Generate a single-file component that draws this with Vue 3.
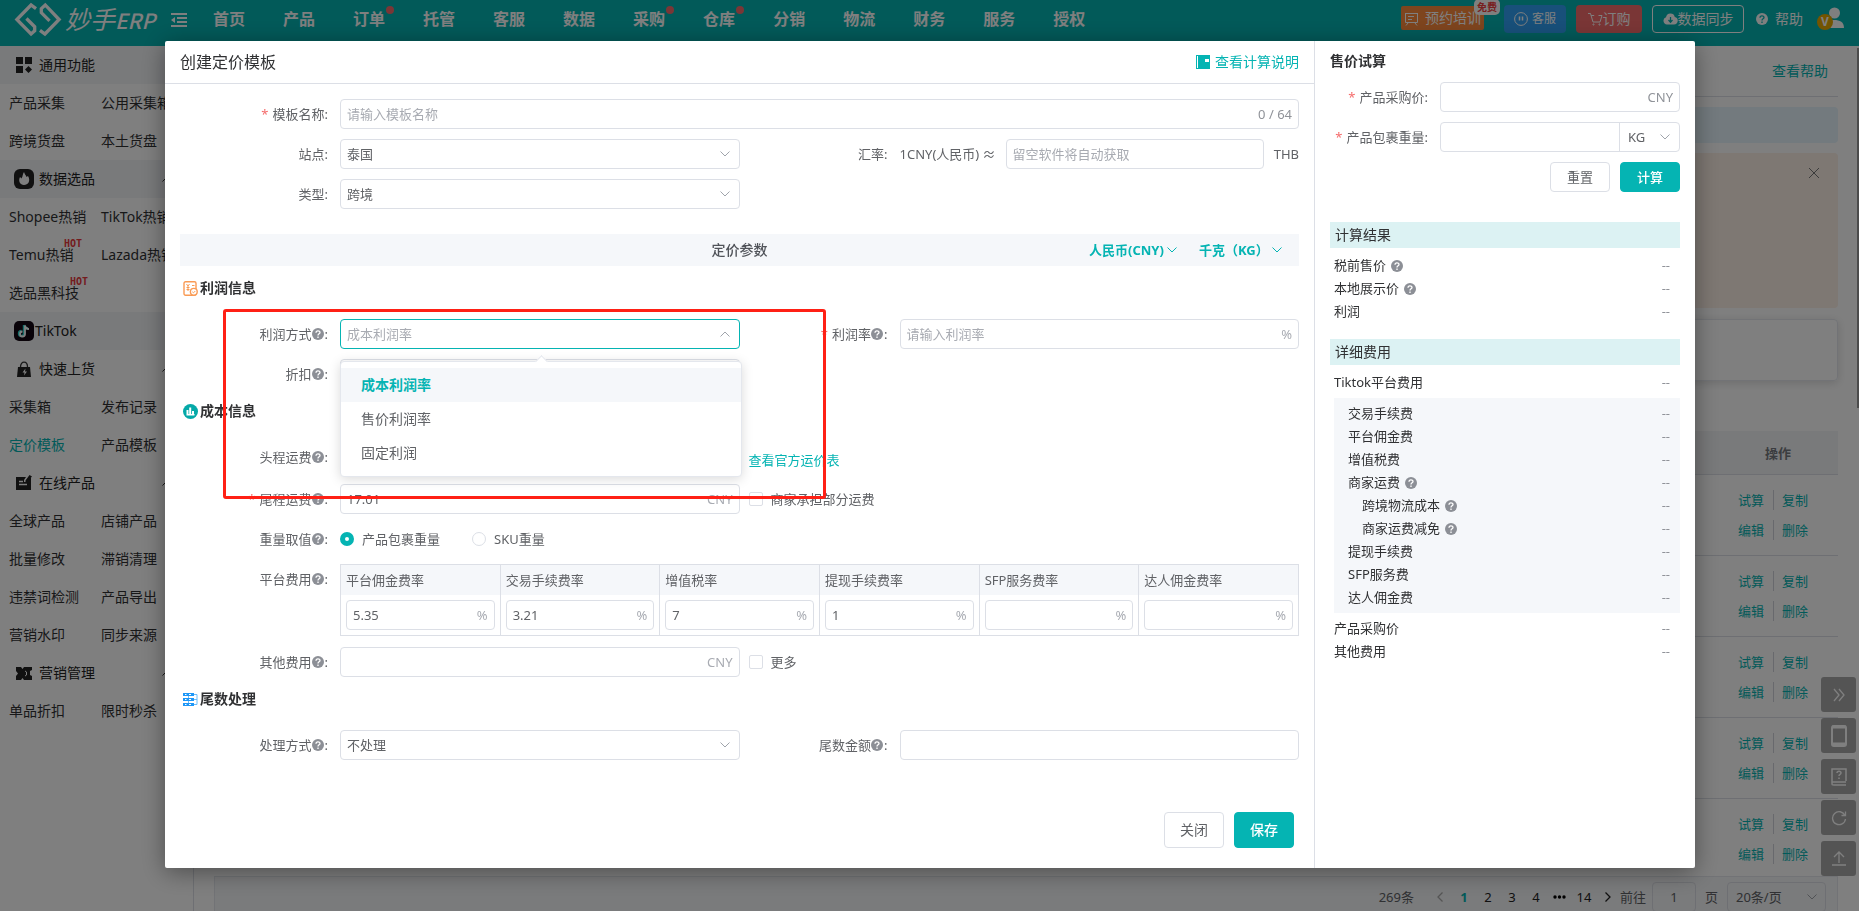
<script setup>
import { ref } from 'vue'

const nav = [
  { name: '首页' }, { name: '产品' }, { name: '订单', dot: true }, { name: '托管' },
  { name: '客服' }, { name: '数据' }, { name: '采购', dot: true }, { name: '仓库', dot: true },
  { name: '分销' }, { name: '物流' }, { name: '财务' }, { name: '服务' }, { name: '授权' },
]

const menu = [
  { head: '通用功能', icon: 'grid', shaded: true, rows: [['产品采集', '公用采集箱'], ['跨境货盘', '本土货盘']] },
  { head: '数据选品', icon: 'fire', shaded: true, arrow: true, rows: [['Shopee热销', 'TikTok热销'], ['Temu热销', 'Lazada热销'], ['选品黑科技']] },
  { head: 'TikTok', icon: 'tiktok', shaded: true, rows: [] },
  { head: '快速上货', icon: 'bag', arrow: true, rows: [['采集箱', '发布记录'], ['定价模板', '产品模板']] },
  { head: '在线产品', icon: 'edit', arrow: true, rows: [['全球产品', '店铺产品'], ['批量修改', '滞销清理'], ['违禁词检测', '产品导出'], ['营销水印', '同步来源']] },
  { head: '营销管理', icon: 'ticket', arrow: true, rows: [['单品折扣', '限时秒杀']] },
]
const hot = ['Temu热销', '选品黑科技']

const fees = ref([
  { name: '平台佣金费率', value: '5.35' },
  { name: '交易手续费率', value: '3.21' },
  { name: '增值税率', value: '7' },
  { name: '提现手续费率', value: '1' },
  { name: 'SFP服务费率', value: '' },
  { name: '达人佣金费率', value: '' },
])

const results = [
  { name: '税前售价', tip: true }, { name: '本地展示价', tip: true }, { name: '利润' },
]
const details = [
  { name: '交易手续费' }, { name: '平台佣金费' }, { name: '增值税费' }, { name: '商家运费', tip: true },
  { name: '跨境物流成本', tip: true, sub: true }, { name: '商家运费减免', tip: true, sub: true },
  { name: '提现手续费' }, { name: 'SFP服务费' }, { name: '达人佣金费' },
]

const modes = ['成本利润率', '售价利润率', '固定利润']
const mode = ref('成本利润率')
const tailCost = ref('17.01')
const weight = ref('package')
</script>

<template>
  <div class="app">
    <svg class="defs" aria-hidden="true">
      <symbol id="down" viewBox="0 0 10 6"><path d="M.5.5 5 5 9.500.5" fill="none" stroke="currentColor" /></symbol>
      <symbol id="up" viewBox="0 0 10 6"><path d="M.5 5.500 5 1l4.500 4.500" fill="none" stroke="currentColor" /></symbol>
      <symbol id="help" viewBox="0 0 12 12">
        <circle cx="6" cy="6" r="6" fill="currentColor" />
        <path class="hook" d="M4 4.700C4 2.300 8 2.300 8 4.600 8 5.900 6 5.800 6 7.400M6 8.400v1.500" fill="none" stroke-width="1.300" />
      </symbol>
    </svg>

    <header class="top">
      <a class="brand" href="#">
        <svg width="48" height="35" viewBox="42 4 144 106" fill="none" stroke="#fff" stroke-width="10">
          <path d="M108 24 93 13 50 57l43 44 11-10V79L79 54" />
          <path d="M120 90l15 11 43-44-42-44-12 11v12l25 25" />
        </svg>
        <span class="word">妙手<b>ERP</b></span>
      </a>
      <button class="fold" aria-label="收起菜单">
        <svg width="16" height="14" viewBox="0 0 16 14" fill="#fff"><path d="M0 0h16v2H0zM6 4h10v2H6zM6 8h10v2H6zM0 12h16v2H0zM4 4v6L0 7z" /></svg>
      </button>
      <nav class="nav">
        <a v-for="n in nav" :key="n.name" href="#">{{ n.name }}<i v-if="n.dot" class="dot"></i></a>
      </nav>
      <div class="tools">
        <a class="train" href="#">
          <svg width="15" height="15" viewBox="0 0 15 15" fill="none" stroke="#fff"><path d="M1 2.500h13M1.500 2.500v9h12v-9M4 5.500h6M4 8.500h4M4 12l-2 2.500M11 12l2 2.500" /></svg>
          预约培训<span class="free">免费</span>
        </a>
        <button class="tool blue">
          <svg width="14" height="14" viewBox="0 0 14 14" fill="none" stroke="#fff"><circle cx="7" cy="7" r="6.400" /><path d="M5.500 4.500v4M8.500 4.500v4" stroke-width="1.500" /></svg>
          客服
        </button>
        <button class="tool red">
          <svg width="15" height="14" viewBox="0 0 15 14" fill="none" stroke="#fff"><path d="M0 1.500h2.500L5 10h7l2-6.500H10.500M3.200 3.500h3" /><circle cx="5.500" cy="12.500" r=".6" /><circle cx="11.500" cy="12.500" r=".6" /></svg>订购
        </button>
        <button class="tool line">
          <svg width="15" height="12" viewBox="0 0 15 12"><path d="M4 11.500A3.700 3.700 0 0 1 3 4.300 4.500 4.500 0 0 1 11.800 4 3.800 3.800 0 0 1 11 11.500z" fill="#fff" /><path d="M7.500 4v5M5.500 7l2 2.200L9.500 7" stroke="#05b4b3" fill="none" stroke-width="1.300" /></svg>数据同步
        </button>
        <a class="assist" href="#"><svg class="q"><use href="#help" /></svg>帮助</a>
        <a class="user" href="#" aria-label="账号">
          <svg width="28" height="24" viewBox="0 0 28 24"><circle cx="17.500" cy="6" r="5.500" fill="#fff" /><path d="M8 21c0-6 3-8 9-8s10 2 10 8z" fill="#fff" /><circle cx="8" cy="15" r="8" fill="#e6a800" /></svg>
          <span>V</span>
        </a>
      </div>
    </header>

    <div class="shell">
      <aside class="side">
        <section v-for="g in menu" :key="g.head">
          <h3 :class="['head', g.icon, { shaded: g.shaded }]">
            <svg v-if="g.icon === 'grid'" width="16" height="16" viewBox="0 0 16 16"><path d="M0 0h7v7H0zM9 0h7v7H9zM0 9h7v7H0zM12.500 9 16 12.500l-3.500 3.500L9 12.500z" /></svg>
            <svg v-else-if="g.icon === 'fire'" width="20" height="20" viewBox="0 0 20 20"><rect width="20" height="20" rx="6" /><path d="M10 3c1 3 2 3 2.500 5L14 7c3 5 0 9-4 9s-6-4-4-8l1.500 1.500C9 7 8.500 5 10 3z" fill="#fff" /></svg>
            <svg v-else-if="g.icon === 'tiktok'" width="20" height="20" viewBox="0 0 20 20"><rect width="20" height="20" rx="5" fill="#120612" /><path d="M10 4v8.500a2.500 2.500 0 1 1-2.500-2.500M10 4c.5 2.500 2 3.500 4 3.500" fill="none" stroke="#2cd9d3" stroke-width="2.400" /><path d="M11 4.500V13a2.500 2.500 0 1 1-2.500-2.500M11 4.500c.5 2.500 2 3.500 4 3.500" fill="none" stroke="#fff" stroke-width="1.800" /></svg>
            <svg v-else-if="g.icon === 'bag'" width="16" height="16" viewBox="0 0 16 16"><path d="M2 6h12l1 10H1z" /><path d="M4.500 6C4.500-.5 11.500-.5 11.500 6" fill="none" stroke="#333" stroke-width="1.300" /><path d="M9.500 7.500 6.500 11.500h2L8 14.500 11 10.500H9z" fill="#fff" /></svg>
            <svg v-else-if="g.icon === 'edit'" width="16" height="16" viewBox="0 0 16 16"><path d="M0 2h10L8 5v2l2 0 4-4h1v12H0zM13.500 0 16 1.500 11 7H9.500V5.500z" /><path d="M3 6.500h4M3 9.500h8" stroke="#fff" stroke-width="1.300" /></svg>
            <svg v-else width="16" height="13" viewBox="0 0 16 13"><path d="M0 0h5l1.500 2L8 0h8v3l-2 1v4l2 1v4H8l-1.500-2L5 13H0V9l2-2.500L0 4z" /><path d="M9 4l1.500 1v3L9 9" stroke="#fff" fill="none" /></svg>
            <span>{{ g.head }}</span>
            <svg v-if="g.arrow" class="chev"><use href="#up" /></svg>
          </h3>
          <div v-for="(r, i) in g.rows" :key="i" class="row">
            <a v-for="t in r" :key="t" href="#" :class="{ on: t === '定价模板' }">{{ t }}<sup v-if="hot.includes(t)">HOT</sup></a>
          </div>
        </section>
      </aside>

      <main class="main">
        <div class="mainhead"><a href="#">查看帮助</a></div>
        <div class="info"></div>
        <div class="warn">
          <button aria-label="关闭提示"><svg width="12" height="12" viewBox="0 0 12 12" stroke="#777" fill="none"><path d="m1 1 10 10M11 1 1 11" /></svg></button>
        </div>
        <div class="card"></div>
        <div class="thead"><span>操作</span></div>
        <div class="tbody">
          <div v-for="n in 5" :key="n" class="trow">
            <div><a href="#">试算</a><a href="#">复制</a></div>
            <div><a href="#">编辑</a><a href="#">删除</a></div>
          </div>
        </div>
        <div class="pager">
          <span class="total">269条</span>
          <button aria-label="上一页"><svg width="6" height="10" viewBox="0 0 6 10" fill="none" stroke="#aaa" stroke-width="1.300"><path d="M5.500.5 1 5l4.500 4.500" /></svg></button>
          <button class="now">1</button><button>2</button><button>3</button><button>4</button>
          <button aria-label="更多页"><svg width="13" height="4" viewBox="0 0 13 4"><circle cx="2" cy="2" r="1.700" /><circle cx="6.500" cy="2" r="1.700" /><circle cx="11" cy="2" r="1.700" /></svg></button>
          <button>14</button>
          <button aria-label="下一页"><svg width="6" height="10" viewBox="0 0 6 10" fill="none" stroke="#222" stroke-width="1.300"><path d="M.5.5 5 5 .5 9.500" /></svg></button>
          <label class="goto" for="page">前往</label>
          <input id="page" value="1" />
          <span class="unit">页</span>
          <div class="size">
            <select aria-label="每页条数"><option>20条/页</option></select>
            <svg class="chev"><use href="#down" /></svg>
          </div>
        </div>
      </main>
    </div>

    <div class="scroll"></div>
    <div class="float">
      <button aria-label="展开"><svg width="12" height="14" viewBox="0 0 12 14"><path d="m1 1 5 6-5 6M6 1l5 6-5 6" stroke-width="1.300" /></svg></button>
      <button aria-label="手机版"><svg width="16" height="22" viewBox="0 0 16 22"><rect x="1" y="1" width="14" height="20" rx="2" stroke-width="2" /><path d="M1 2h14M1 19h14" stroke-width="3" /></svg></button>
      <button aria-label="帮助手册"><svg width="16" height="18" viewBox="0 0 16 18"><path d="M15 13V1H1v14c0 2 0 2 2 2h12M1 14h14M6 5c0-2.500 4-2.500 4 0 0 1.500-2 1.200-2 3M8 9.500v1.500" stroke-width="1.500" /></svg></button>
      <button aria-label="刷新"><svg width="16" height="16" viewBox="0 0 16 16"><path d="M14 5.500A6.500 6.500 0 1 0 14.500 9M14.500 1.500v4h-4" stroke-width="1.300" /></svg></button>
      <button aria-label="回到顶部"><svg width="14" height="15" viewBox="0 0 14 15"><path d="M7 12V1M2 6l5-5 5 5M0 14h14" stroke-width="1.300" /></svg></button>
    </div>

    <div class="mask">
      <div class="modal" role="dialog" aria-label="创建定价模板">
        <form class="left" @submit.prevent>
          <div class="title">
            <h2>创建定价模板</h2>
            <a href="#">
              <svg width="14" height="14" viewBox="0 0 14 14"><path d="M0 0h14v14H0z" fill="#05b4b3" /><path d="M1.500 1v12" stroke="#fff" /><path d="M9 4h4v3H9z" fill="#fff" /></svg>
              <span>查看计算说明</span>
            </a>
          </div>

          <div class="form">
            <div class="frow">
              <label class="lab" for="name"><em>*</em>模板名称:</label>
              <div class="box span3"><input id="name" placeholder="请输入模板名称" /><span class="suf dark">0 / 64</span></div>
            </div>
            <div class="frow">
              <label class="lab" for="site">站点:</label>
              <div class="box"><select id="site"><option>泰国</option></select><svg class="chev"><use href="#down" /></svg></div>
              <label class="lab" for="rate">汇率:</label>
              <div class="rate">
                <span>1CNY(人民币) ≈</span>
                <div class="box"><input id="rate" placeholder="留空软件将自动获取" /></div>
                <span>THB</span>
              </div>
            </div>
            <div class="frow">
              <label class="lab" for="type">类型:</label>
              <div class="box"><select id="type"><option>跨境</option></select><svg class="chev"><use href="#down" /></svg></div>
            </div>

            <div class="bar">
              <span></span><h3>定价参数</h3>
              <div class="units">
                <div><select aria-label="币种"><option>人民币(CNY)</option></select><svg class="chev"><use href="#down" /></svg></div>
                <div><select aria-label="重量单位"><option>千克（KG）</option></select><svg class="chev"><use href="#down" /></svg></div>
              </div>
            </div>

            <h4 class="sect">
              <svg width="15" height="15" viewBox="0 0 15 15" fill="none" stroke="#f99b55"><rect x="1" y=".7" width="12" height="13.500" rx="1.500" stroke-width="1.400" /><path d="m3.500 3 1.500 2 1.500-2M5 5v5M3.500 6.500h3M3.500 8.500h3M9 4.500h2.500" /><circle cx="10.800" cy="10.800" r="3.400" fill="#fff" stroke-width="1.400" /><path d="m9.300 10.800 1.200 1 1.800-1.800" /></svg>利润信息
            </h4>
            <div class="frow">
              <label class="lab" for="mode">利润方式<svg class="q"><use href="#help" /></svg>:</label>
              <div class="box focus">
                <select id="mode" v-model="mode" class="hint"><option v-for="m in modes" :key="m">{{ m }}</option></select>
                <svg class="chev"><use href="#up" /></svg>
                <ul class="drop" role="listbox">
                  <li v-for="m in modes" :key="m" role="option" :class="{ on: m === mode }" @click="mode = m">{{ m }}</li>
                </ul>
              </div>
              <label class="lab" for="ratio"><em>*</em>利润率<svg class="q"><use href="#help" /></svg>:</label>
              <div class="box"><input id="ratio" placeholder="请输入利润率" /><span class="suf">%</span></div>
            </div>
            <div class="frow">
              <label class="lab" for="discount">折扣<svg class="q"><use href="#help" /></svg>:</label>
              <div class="box"><input id="discount" /></div>
            </div>

            <h4 class="sect">
              <svg width="15" height="15" viewBox="0 0 15 15"><circle cx="7.500" cy="7.500" r="7.500" fill="#05a9a8" /><path d="M3.500 6h2v5h-2zM6.200 3.500h2V11h-2zM9 7h2v4H9zM3.500 10h8v1.500h-8z" fill="#fff" /></svg>成本信息
            </h4>
            <div class="frow tall">
              <label class="lab" for="first">头程运费<svg class="q"><use href="#help" /></svg>:</label>
              <div class="box"><input id="first" /></div>
              <div class="extra"><a href="#">查看官方运价表</a></div>
            </div>
            <div class="frow">
              <label class="lab" for="tail"><em>*</em>尾程运费<svg class="q"><use href="#help" /></svg>:</label>
              <div class="box"><input id="tail" v-model="tailCost" /><span class="suf">CNY</span></div>
              <div class="extra"><label class="tick"><input type="checkbox" />商家承担部分运费</label></div>
            </div>
            <div class="frow">
              <span class="lab">重量取值<svg class="q"><use href="#help" /></svg>:</span>
              <div class="radios">
                <label class="tick"><input v-model="weight" type="radio" value="package" />产品包裹重量</label>
                <label class="tick"><input v-model="weight" type="radio" value="sku" />SKU重量</label>
              </div>
            </div>
            <div class="frow">
              <span class="lab">平台费用<svg class="q"><use href="#help" /></svg>:</span>
              <table class="fees span3">
                <thead><tr><th v-for="f in fees" :key="f.name">{{ f.name }}</th></tr></thead>
                <tbody><tr><td v-for="f in fees" :key="f.name"><div class="box"><input v-model="f.value" :aria-label="f.name" /><span class="suf">%</span></div></td></tr></tbody>
              </table>
            </div>
            <div class="frow">
              <label class="lab" for="other">其他费用<svg class="q"><use href="#help" /></svg>:</label>
              <div class="box"><input id="other" /><span class="suf">CNY</span></div>
              <div class="extra"><label class="tick"><input type="checkbox" />更多</label></div>
            </div>

            <h4 class="sect">
              <svg width="15" height="13" viewBox="0 0 15 13"><path d="M0 0h11v3H0zM0 5h11v3H0zM0 10h11v3H0z" fill="#1e97f7" /><path d="M2 1.500h1.500M6 1.500h2M2 6.500h1.500M6 6.500h2M2 11.500h1.500M6 11.500h2" stroke="#fff" /><path d="M5.500 3v2M5.500 8v2M11 1.500h3v10h-3M11 6.500h3" stroke="#6bbcfa" fill="none" /></svg>尾数处理
            </h4>
            <div class="frow">
              <label class="lab" for="round">处理方式<svg class="q"><use href="#help" /></svg>:</label>
              <div class="box"><select id="round"><option>不处理</option></select><svg class="chev"><use href="#down" /></svg></div>
              <label class="lab" for="amount">尾数金额<svg class="q"><use href="#help" /></svg>:</label>
              <div class="box"><input id="amount" /></div>
            </div>
          </div>

          <div class="foot">
            <button type="button" class="btn">关闭</button>
            <button type="submit" class="btn main-btn">保存</button>
          </div>
          <div class="marker"></div>
        </form>

        <form class="right" @submit.prevent>
          <h3>售价试算</h3>
          <div class="trial">
            <label class="lab" for="buy"><em>*</em>产品采购价:</label>
            <div class="box"><input id="buy" /><span class="suf dark">CNY</span></div>
            <label class="lab" for="pack"><em>*</em>产品包裹重量:</label>
            <div class="box pack">
              <input id="pack" />
              <div class="kg"><select aria-label="重量单位"><option>KG</option></select><svg class="chev"><use href="#down" /></svg></div>
            </div>
          </div>
          <div class="acts">
            <button type="reset" class="btn small">重置</button>
            <button type="submit" class="btn small main-btn">计算</button>
          </div>
          <h4>计算结果</h4>
          <div class="list">
            <div v-for="r in results" :key="r.name" class="item">
              <span>{{ r.name }}</span><svg v-if="r.tip" class="q"><use href="#help" /></svg><b>--</b>
            </div>
          </div>
          <h4>详细费用</h4>
          <div class="list">
            <div class="item"><span>Tiktok平台费用</span><b>--</b></div>
            <div class="inner">
              <div v-for="r in details" :key="r.name" :class="['item', { sub: r.sub }]">
                <span>{{ r.name }}</span><svg v-if="r.tip" class="q"><use href="#help" /></svg><b>--</b>
              </div>
            </div>
            <div class="item"><span>产品采购价</span><b>--</b></div>
            <div class="item"><span>其他费用</span><b>--</b></div>
          </div>
        </form>
      </div>
    </div>
  </div>
</template>

<style>
body { margin: 0; background: #fff; }
</style>

<style scoped>
.app, .app * { box-sizing: border-box; }
.app {
  display: flex; flex-direction: column; height: 100vh; overflow: hidden; position: relative;
  font: 13px/20px "Noto Sans", "Noto Sans CJK SC", sans-serif; color: #606266;
}
.defs { position: absolute; width: 0; height: 0; }
.hook { stroke: var(--mark, #fff); }
button, input, select { font: inherit; color: inherit; margin: 0; padding: 0; border: 0; background: none; outline: 0; }
select { appearance: none; }
h2, h3, h4, ul { margin: 0; padding: 0; list-style: none; }
a { color: #05b4b3; text-decoration: none; }
svg { flex: none; }
.chev { width: 10px; height: 6px; color: #a0a4ab; pointer-events: none; }
.q { width: 12px; height: 12px; color: #8c8f96; }

.top { flex: none; display: flex; align-items: center; height: 46px; padding: 0 16px 8px 14px; background: #05b4b3; }
.brand { display: flex; align-items: center; color: #fff; width: 157px; }
.word { font-size: 25px; line-height: 34px; font-style: italic; margin-left: 3px; white-space: nowrap; }
.word b { font-family: "Noto Sans CJK SC", sans-serif; font-weight: 500; font-size: 21px; }
.fold { width: 16px; height: 14px; display: flex; margin-right: 26px; margin-top: 1px; }
.nav { display: flex; gap: 38px; flex: 1; }
.nav a { position: relative; color: #fff; font-size: 16px; font-weight: 700; line-height: 24px; }
.dot { position: absolute; right: -9px; top: -1px; width: 8px; height: 8px; border-radius: 50%; background: #f56c6c; }
.tools { display: flex; align-items: center; color: #fff; font-size: 14px; }
.tools a { color: #fff; }
.train { position: relative; display: flex; align-items: center; gap: 6px; height: 24px; width: 83px; padding-left: 3px; background: #fc8a3c; margin: 0 20px 2px 0; border-radius: 2px; white-space: nowrap; }
.free { position: absolute; right: -16px; top: -7px; padding: 0 3px; border-radius: 5px; background: #fff; color: #f04040; font-size: 10px; line-height: 16px; font-weight: 700; }
.tool { display: flex; align-items: center; justify-content: center; height: 28px; border-radius: 4px; margin-right: 10px; white-space: nowrap; }
.tool.blue { width: 62px; gap: 4px; font-size: 12px; background: #30a0f4; }
.tool.red { width: 66px; background: #f56c6c; }
.tool.line { width: 92px; border: 1px solid #fff; margin-right: 12px; }
.assist { display: flex; align-items: center; gap: 7px; margin-right: 14px; }
.assist .q { color: #fff; --mark: #05b4b3; }
.user { position: relative; width: 26px; height: 24px; }
.user span { position: absolute; left: 0; top: 5px; width: 16px; text-align: center; font-size: 12px; font-weight: 700; }

.shell { display: flex; flex: 1; min-height: 0; }
.side { flex: none; width: 194px; border-right: 1px solid #dcdfe6; font-size: 14px; overflow: hidden; }
.head { display: flex; align-items: center; height: 38px; padding: 0 21px 0 16px; font-size: 14px; font-weight: 400; color: #222; gap: 7px; fill: #222; }
.head.shaded { background: #f2f4f7; }
.head.fire { padding-left: 14px; gap: 5px; }
.head.tiktok { padding-left: 14px; gap: 1px; }
.head .chev { margin-left: auto; color: #333; }
.row { display: flex; align-items: center; height: 38px; padding-left: 9px; line-height: 14px; }
.row a { position: relative; min-width: 92px; color: #303133; white-space: nowrap; }
.row a.on { color: #05b4b3; }
.row sup { position: absolute; left: 55px; top: -8px; color: #e8383d; font: 700 10px/8px "DejaVu Sans Mono", monospace; }
.row a:nth-child(1):last-child sup { left: 61px; }

.main { flex: 1; min-width: 0; display: flex; flex-direction: column; padding: 0 21px 0 20px; }
.mainhead { display: flex; justify-content: flex-end; align-items: center; height: 51px; padding-right: 10px; border-bottom: 1px solid #dcdfe6; font-size: 14px; flex: none; }
.info { flex: none; height: 36px; margin: 10px 0; border-radius: 4px; background: #e6f5fc; }
.warn { flex: none; height: 155px; border-radius: 4px; background: #fdf0e6; display: flex; justify-content: flex-end; align-items: flex-start; padding: 14px 18px; }
.warn button { display: flex; }
.card { flex: none; height: 62px; margin: 11px 0 50px; border: 1px solid #e4e7ed; border-radius: 4px; box-shadow: 0 2px 10px rgba(0, 0, 0, .15); }
.thead { flex: none; display: flex; justify-content: flex-end; align-items: center; height: 44px; padding-right: 47px; background: #f3f4f6; color: #777a80; font-weight: 700; border-bottom: 1px solid #dcdfe6; }
.tbody { flex: 1; min-height: 0; overflow: hidden; }
.trow { display: flex; flex-direction: column; align-items: flex-end; justify-content: center; gap: 10px; height: 81px; padding-right: 22px; border-bottom: 1px solid #dcdfe6; }
.trow div { display: flex; }
.trow a { width: 43px; padding-left: 8px; line-height: 20px; }
.trow a + a { border-left: 1px solid #d0d3da; }
.pager { flex: none; display: flex; justify-content: flex-end; align-items: center; height: 35px; padding: 6px 11px 0 0; background: #f5f6f8; border: 1px solid #e4e7ed; border-bottom: 0; color: #606266; }
.pager button { min-width: 24px; color: #222; display: flex; align-items: center; justify-content: center; }
.pager .now { color: #05b4b3; font-weight: 700; }
.total { margin-right: 14px; }
.pager .goto { margin: 0 6px 0 0; }
.pager input { width: 44px; height: 30px; border: 1px solid #dcdfe6; border-radius: 4px; text-align: center; }
.unit { margin: 0 9px; }
.size { display: flex; align-items: center; width: 99px; height: 30px; border: 1px solid #dcdfe6; border-radius: 4px; padding: 0 8px; }
.size select { flex: 1; }

.scroll { position: absolute; right: 0; top: 48px; width: 2px; height: 360px; background: #999; }
.float { position: absolute; right: 3px; bottom: 35px; display: flex; flex-direction: column; gap: 6px; }
.float button { width: 35px; height: 35px; border-radius: 3px; background: #a9a9a9; display: flex; align-items: center; justify-content: center; }
.float svg { fill: none; stroke: #fff; }

.mask { position: fixed; inset: 0; background: rgba(0, 0, 0, .5); padding: 41px 164px 0 165px; overflow: hidden; }
.modal { display: flex; background: #fff; border-radius: 2px; box-shadow: 0 4px 24px rgba(0, 0, 0, .4); }
.left { position: relative; flex: 1; min-width: 0; border-right: 1px solid #dcdfe6; }
.title { display: flex; align-items: center; justify-content: space-between; height: 43px; padding: 0 15px; border-bottom: 1px solid #dcdfe6; }
.title h2 { font-size: 16px; font-weight: 400; color: #303133; }
.title a { display: flex; align-items: center; gap: 5px; font-size: 14px; }
.form { padding: 15px 15px 0; }
.frow { display: grid; grid-template-columns: 160px 1fr 160px 1fr; align-items: center; min-height: 30px; margin-bottom: 10px; }
.frow.tall { min-height: 32px; align-items: start; }
.frow.tall .extra { align-self: end; line-height: 28px; }
.lab { display: flex; align-items: center; justify-content: flex-end; padding-right: 12px; min-height: 30px; align-self: start; white-space: nowrap; }
.lab em { color: #f56c6c; font-style: normal; margin-right: 4px; }
.lab .q { margin-right: 1px; }
.box { position: relative; display: flex; align-items: center; height: 30px; border: 1px solid #dcdfe6; border-radius: 4px; background: #fff; padding: 0 6px; min-width: 0; }
.box input, .box select { flex: 1; min-width: 0; width: 100%; height: 28px; }
.box > .chev { margin-right: 3px; }
.box input::placeholder { color: #a8abb2; opacity: 1; }
.box select.hint { color: #a8abb2; }
.box.focus { border-color: #05b4b3; }
.suf { color: #a8abb2; }
.suf.dark { color: #909399; }
.span3 { grid-column: 2 / 5; }
.rate { display: flex; align-items: center; gap: 10px; white-space: nowrap; }
.rate .box { flex: 1; }
.bar { display: grid; grid-template-columns: 1fr auto 1fr; align-items: center; height: 32px; margin-top: 25px; background: #f5f7fa; }
.bar h3 { font-size: 14px; font-weight: 500; color: #505359; }
.units { display: flex; justify-content: flex-end; gap: 22px; padding-right: 17px; }
.units div { display: flex; align-items: center; gap: 3px; }
.units select, .units .chev { color: #05b4b3; }
.units select { font-weight: 700; }
.sect { display: flex; align-items: center; gap: 2px; height: 44px; padding-left: 3px; margin-bottom: 9px; font-size: 14px; font-weight: 700; color: #303133; }
.frow + .sect { margin-top: -10px; }
.drop { position: absolute; z-index: 2; left: -1px; right: -3px; top: 41px; padding: 6px 0; background: #fff; border: 1px solid #e4e7ed; border-radius: 4px; box-shadow: 0 2px 12px rgba(0, 0, 0, .15); }
.drop::before { content: ""; position: absolute; left: 50%; top: -5px; width: 8px; height: 8px; margin-left: -4px; background: #fff; border: solid #e4e7ed; border-width: 1px 0 0 1px; transform: rotate(45deg); }
.drop li { position: relative; padding: 0 20px; font-size: 14px; line-height: 34px; }
.drop .on { color: #05b4b3; font-weight: 700; background: #f5f7fa; }
.extra { grid-column: 3 / 5; padding-left: 9px; }
.tick { display: flex; align-items: center; gap: 8px; }
.tick input { appearance: none; width: 14px; height: 14px; border: 1px solid #dcdfe6; border-radius: 2px; background: #fff; }
.radios { display: flex; gap: 32px; grid-column: 2 / 5; }
.tick input[type="radio"] { border-radius: 50%; }
.tick input[type="radio"]:checked { border: 5px solid #05b4b3; }
.fees { table-layout: fixed; width: 100%; border-collapse: collapse; margin-bottom: 1px; }
.fees th, .fees td { border: solid #dcdfe6; border-width: 0 1px; padding: 5px; text-align: left; font-weight: 400; }
.fees th { background: #f5f7fa; border-top-width: 1px; }
.fees td { border-bottom-width: 1px; }
.foot { display: flex; justify-content: flex-end; gap: 10px; padding: 42px 20px 20px; }
.btn { width: 60px; height: 36px; font-size: 14px; border: 1px solid #dcdfe6; border-radius: 4px; background: #fff; }
.btn.small { height: 30px; font-size: 13px; }
.btn.main-btn { background: #05b4b3; border-color: #05b4b3; color: #fff; font-weight: 500; }
.marker { position: absolute; z-index: 3; left: 58px; top: 268px; width: 603px; height: 190px; border: 3px solid #ff2015; border-radius: 3px; pointer-events: none; }

.right { flex: none; width: 380px; padding: 10px 15px 20px; color: #303133; }
.right h3 { font-size: 14px; line-height: 20px; font-weight: 700; }
.trial { display: grid; grid-template-columns: 110px 1fr; gap: 10px 0; margin-top: 11px; color: #606266; }
.pack { padding-right: 0; }
.kg { display: flex; align-items: center; width: 60px; height: 28px; padding: 0 9px 0 8px; border-left: 1px solid #dcdfe6; }
.acts { display: flex; justify-content: flex-end; gap: 10px; margin: 10px 0 30px; color: #606266; }
.right h4 { font-size: 14px; line-height: 26px; font-weight: 400; padding-left: 5px; background: #dcf2f3; }
.list { padding: 6px 0 16px 4px; }
.item { display: flex; align-items: center; height: 23px; padding: 0 10px 2px 0; }
.item .q { margin: 2px 0 0 5px; }
.item b { margin-left: auto; font-weight: 400; color: #909399; }
.inner { margin: 4px 0; padding: 4px 0; background: #f5f7fa; }
.inner .item { padding-left: 14px; }
.inner .sub { padding-left: 28px; }
</style>
